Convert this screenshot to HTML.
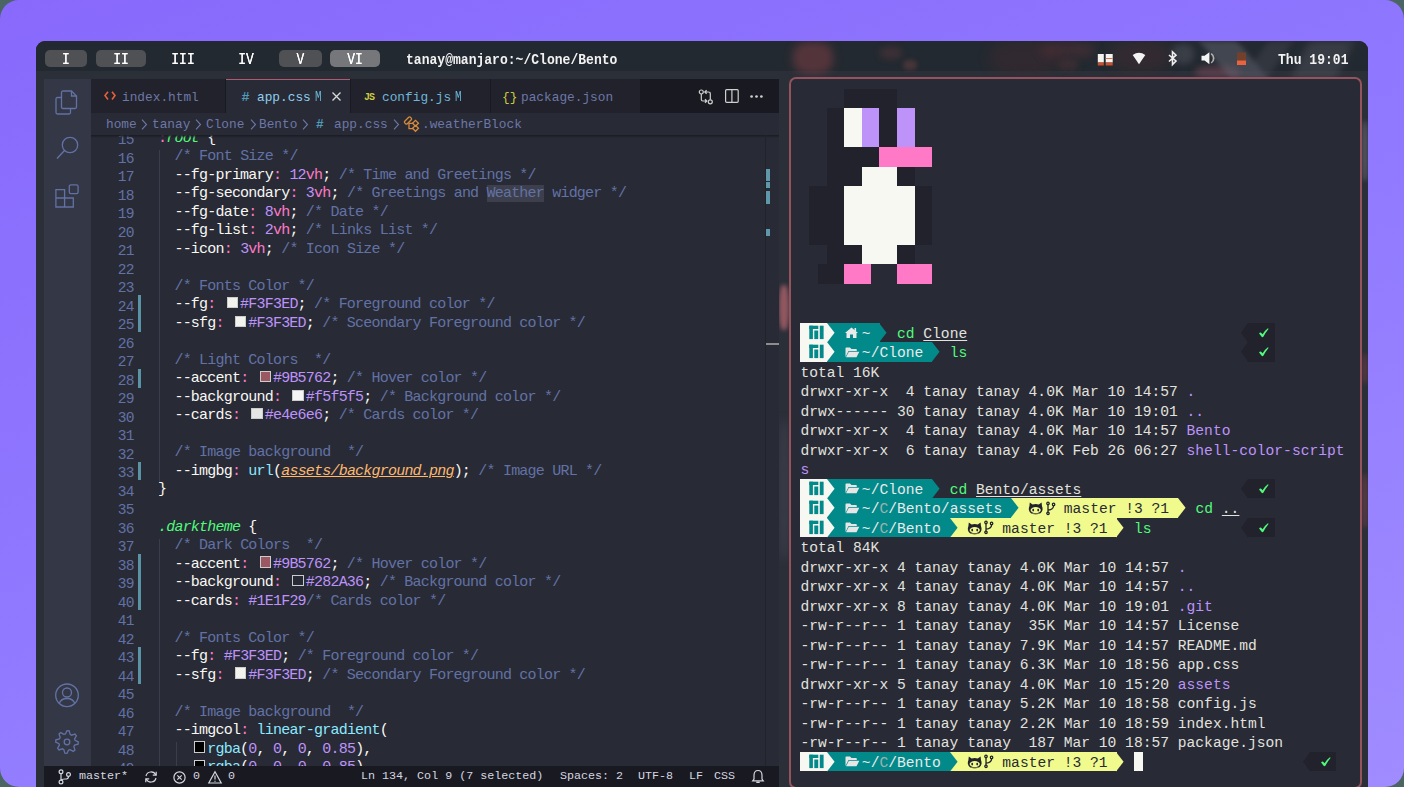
<!DOCTYPE html><html><head><meta charset="utf-8"><style>
*{margin:0;padding:0;box-sizing:border-box}
html,body{width:1404px;height:787px;overflow:hidden;background:#4b6464;font-family:"Liberation Mono",monospace}
.a{position:absolute}
svg{position:absolute;overflow:visible}
#bg{left:0;top:0;width:1404px;height:787px;border-radius:19px;background:linear-gradient(160deg,#8869fc 0%,#9079ff 50%,#a08cff 100%)}
#screen{left:36px;top:41px;width:1332px;height:746px;border-radius:9px 9px 0 0;background:#2b2f38;overflow:hidden}
#topbar{left:36px;top:41px;width:1332px;height:29.5px;border-radius:9px 9px 0 0;background:#232930}
.ws{top:50px;height:17px;border-radius:5px;color:#fff;font-weight:normal;text-shadow:0 0 0.4px #fff;font-size:13px;line-height:17px;text-align:center}.ws span{display:inline-block;transform:scaleY(1.2);transform-origin:50% 60%;position:relative;top:1.6px}
.tb{height:20px;line-height:20px;font-size:13.05px;font-weight:bold;color:#f2f2f2;white-space:pre;transform:scaleY(1.17);transform-origin:0 0}
#act{left:44px;top:79px;width:47px;height:687px;background:#343746}
#tabs{left:91px;top:79px;width:688px;height:34px;background:#191a21}
.tab{top:79px;height:34px;background:#21222c}
.tt{top:87.5px;height:20px;line-height:20px;font-size:12.8px;white-space:pre;color:#6d78a6}
#crumb{left:91px;top:113px;width:688px;height:22px;background:#282a36}
.bc{top:115px;height:20px;line-height:20px;font-size:12.8px;white-space:pre;color:#6d78a6}
#editor{left:91px;top:135px;width:688px;height:631px;background:#282a36;overflow:hidden}
#status{left:44px;top:766px;width:735px;height:21px;background:#191a21}
.st{top:766px;height:21px;line-height:21px;font-size:11.7px;white-space:pre;color:#d4d6e0}
#term{left:789px;top:77px;width:573px;height:712px;border:2px solid #94535d;border-radius:7px;background:#282a36}
.cl{left:158px;height:18.53px;font-size:15px;letter-spacing:-0.79px;line-height:18.53px;margin-top:-1.6px;white-space:pre;color:#f8f8f2}
.ln{left:91px;width:43px;text-align:right;height:18.53px;font-size:14.6px;letter-spacing:-0.6px;margin-top:-0.3px;line-height:18.53px;color:#6272a4}
.tr{left:800.4px;height:19.5px;font-size:14.63px;line-height:19.5px;margin-top:2px;white-space:pre;color:#d8d8d4}
.c{color:#6272a4}.p{color:#ff79c6}.n{color:#bd93f9}.g{color:#50fa7b;font-style:italic}.cy{color:#8be9fd}.o{color:#ffb86c;font-style:italic;text-decoration:underline}
.sw{display:inline-block;width:11.3px;height:11.2px;border:1px solid #ccc;vertical-align:0px;margin-left:3px;margin-right:2.1px}
.pb{position:absolute;height:19.5px}
</style></head><body>
<div id="bg" class="a"></div>
<div id="screen" class="a"></div>
<div id="topbar" class="a"></div>
<div class="a" style="left:36px;top:41px;width:1332px;height:746px;overflow:hidden;border-radius:9px 9px 0 0"><div class="a" style="left:-36px;top:-41px;width:1404px;height:787px">
<div class="a" style="left:793px;top:42px;width:40px;height:32px;background:rgba(125,62,70,0.55);border-radius:40%;filter:blur(4px)"></div>
<div class="a" style="left:880px;top:47px;width:22px;height:12px;background:rgba(110,60,66,0.35);border-radius:40%;filter:blur(3px)"></div>
<div class="a" style="left:903px;top:60px;width:14px;height:10px;background:rgba(125,72,72,0.4);border-radius:40%;filter:blur(2px)"></div>
<div class="a" style="left:1040px;top:42px;width:55px;height:16px;background:rgba(105,52,58,0.35);border-radius:40%;filter:blur(4px)"></div>
<div class="a" style="left:1058px;top:60px;width:20px;height:10px;background:rgba(105,58,58,0.35);border-radius:40%;filter:blur(3px)"></div>
<div class="a" style="left:990px;top:41px;width:70px;height:34px;background:rgba(80,42,48,0.3);border-radius:40%;filter:blur(6px)"></div>
<div class="a" style="left:1172px;top:44px;width:22px;height:20px;background:rgba(92,94,106,0.4);border-radius:40%;filter:blur(3px)"></div>
<div class="a" style="left:1195px;top:66px;width:45px;height:12px;background:rgba(140,80,100,0.45);border-radius:40%;filter:blur(3px)"></div>
<div class="a" style="left:1110px;top:41px;width:60px;height:30px;background:rgba(85,45,50,0.3);border-radius:40%;filter:blur(6px)"></div>
<div class="a" style="left:779px;top:285px;width:10px;height:45px;background:rgba(165,95,105,0.85);border-radius:40%;filter:blur(2px)"></div>
<div class="a" style="left:779px;top:420px;width:10px;height:140px;background:rgba(70,72,84,0.6);border-radius:40%;filter:blur(4px)"></div>
<div class="a" style="left:1362px;top:121px;width:6px;height:60px;background:rgba(110,112,120,0.6);border-radius:40%;filter:blur(2px)"></div>
<div class="a" style="left:1362px;top:354px;width:6px;height:30px;background:rgba(110,60,70,0.6);border-radius:40%;filter:blur(2px)"></div>
<div class="a" style="left:1362px;top:474px;width:6px;height:54px;background:rgba(120,65,75,0.6);border-radius:40%;filter:blur(2px)"></div>
<div class="a" style="left:1215px;top:41px;width:38px;height:38px;background:rgba(98,100,112,0.5);transform:skewX(40deg);filter:blur(3px)"></div>
<div class="a" style="left:1300px;top:41px;width:45px;height:38px;background:rgba(88,90,100,0.4);transform:skewX(-25deg);filter:blur(4px)"></div>
<div class="a" style="left:1255px;top:41px;width:25px;height:38px;background:rgba(70,72,84,0.4);transform:skewX(-35deg);filter:blur(3px)"></div>
</div></div>
<div class="a ws" style="left:45px;width:42px;background:#505154;"><span>I</span></div>
<div class="a ws" style="left:96px;width:50px;background:#505154;"><span>II</span></div>
<div class="a ws" style="left:160px;width:46px;"><span>III</span></div>
<div class="a ws" style="left:226px;width:40px;"><span>IV</span></div>
<div class="a ws" style="left:279px;width:43px;background:#505154;"><span>V</span></div>
<div class="a ws" style="left:330px;width:50px;background:#76777a;"><span>VI</span></div>
<div class="a tb" style="left:406px;top:49px">tanay@manjaro:~/Clone/Bento</div>
<div class="a tb" style="left:1278px;top:49px">Thu 19:01</div>
<svg style="left:1097px;top:53px" width="17" height="13"><rect x="0.8" y="1" width="6" height="8.5" fill="#f4f4f0"/><rect x="8.7" y="1" width="7" height="8.5" fill="#f4f4f0"/><rect x="0.8" y="9.5" width="6" height="3" fill="#c8502e"/><rect x="8.7" y="9.5" width="7" height="3" fill="#c8502e"/><rect x="8.7" y="5" width="7" height="1" fill="#e07050"/></svg>
<svg style="left:1132px;top:52px" width="15" height="13"><path d="M0.7 3 Q7 -1.5 13.3 3 L7 12.2 Z" fill="#f4f4f4"/></svg>
<svg style="left:1167px;top:51px" width="12" height="15"><path d="M2 4 L9 10 L5.5 13.5 V0.8 L9 4.2 L2 10.5" fill="none" stroke="#f0f0f0" stroke-width="1.6"/></svg>
<svg style="left:1200.5px;top:52px" width="16" height="13"><path d="M0.5 3.8 H3.6 L8.4 0.2 V12.3 L3.6 8.6 H0.5 Z" fill="#f4f4f4"/><path d="M10.2 1.6 A5.6 5.6 0 0 1 10.2 10.9" fill="none" stroke="#b0b0b0" stroke-width="1.7"/></svg>
<svg style="left:1236px;top:52px" width="11" height="14"><rect x="1" y="0.5" width="9" height="8.3" fill="#74402c"/><rect x="1" y="8.5" width="9" height="4.5" fill="#e8633e"/></svg>
<div id="act" class="a"></div>
<div id="tabs" class="a"></div>
<div class="a tab" style="left:91px;width:134px"></div>
<div class="a tab" style="left:226px;width:124px;background:#282a36;border-top:1.5px solid #b05a72"></div>
<div class="a tab" style="left:351px;width:139px"></div>
<div class="a tab" style="left:491px;width:149px"></div>
<svg style="left:104px;top:91px" width="12" height="10" fill="none" stroke="#e5603b" stroke-width="1.6"><path d="M4 0.8 L1 4.6 L4 8.4 M8 0.8 L11 4.6 L8 8.4"/></svg>
<div class="a tt" style="left:122px">index.html</div>
<div class="a tt" style="left:241.5px;color:#519aba;font-weight:bold;font-size:13.5px">#</div>
<div class="a tt" style="left:257px;color:#8fd0ef">app.css</div>
<div class="a tt" style="left:315px;top:87px;color:#6ab6d8;font-size:11px;transform:scaleY(1.3)">M</div>
<svg style="left:332px;top:92px" width="9" height="9"><path d="M0.5 0.5 L8.5 8.5 M8.5 0.5 L0.5 8.5" stroke="#dadada" stroke-width="1.3"/></svg>
<div class="a tt" style="left:364px;color:#cbcb41;font-weight:bold;font-size:10px;letter-spacing:-1px">JS</div>
<div class="a tt" style="left:382px;color:#6fb7da">config.js</div>
<div class="a tt" style="left:455px;top:87px;color:#6ab6d8;font-size:11px;transform:scaleY(1.3)">M</div>
<div class="a tt" style="left:502px;color:#cbcb41">{}</div>
<div class="a tt" style="left:521px">package.json</div>
<svg style="left:698px;top:89px" width="16" height="16" fill="none" stroke="#cfcfcf" stroke-width="1.2"><circle cx="3.3" cy="3" r="2"/><circle cx="12.3" cy="12.8" r="2"/><path d="M3.3 5 V10.5 Q3.3 12 5 12 H8.5 M7 10.3 L8.8 12 L7 13.7"/><path d="M12.3 10.8 V5 Q12.3 3 10.5 3 H7 M8.6 1.3 L6.8 3 L8.6 4.7"/></svg>
<svg style="left:725px;top:89px" width="14" height="14" fill="none" stroke="#cfcfcf" stroke-width="1.2"><rect x="0.6" y="0.7" width="12.6" height="12.6" rx="1"/><path d="M6.9 0.7 V13.3"/></svg>
<svg style="left:750px;top:95px" width="14" height="3" fill="#cfcfcf"><circle cx="1.6" cy="1.5" r="1.35"/><circle cx="6.5" cy="1.5" r="1.35"/><circle cx="11.4" cy="1.5" r="1.35"/></svg>
<svg style="left:55px;top:90px" width="24" height="25" fill="none" stroke="#6272a4" stroke-width="1.3"><path d="M6.5 7.5 H2.5 Q1 7.5 1 9 V22.5 Q1 24 2.5 24 H14 Q15.5 24 15.5 22.5 V18.5"/><path d="M8 1 H16.5 L21.5 6 V17 Q21.5 18.5 20 18.5 H8 Q6.5 18.5 6.5 17 V2.5 Q6.5 1 8 1 Z"/><path d="M16.5 1 V6 H21.5"/></svg>
<svg style="left:56px;top:136px" width="24" height="25" fill="none" stroke="#6272a4" stroke-width="1.3" stroke-width="1.4"><circle cx="14" cy="9" r="7.7"/><path d="M8.5 14.5 L1 22.5"/></svg>
<svg style="left:55px;top:184px" width="25" height="25" fill="none" stroke="#6272a4" stroke-width="1.3"><path d="M0.9 5.6 H9.6 V14 H18.3 V23 H0.9 Z M0.9 14 H9.6 V23"/><rect x="14.3" y="0.8" width="8.8" height="8.8" rx="1.6"/></svg>
<svg style="left:55px;top:683px" width="25" height="25" fill="none" stroke="#6272a4" stroke-width="1.3"><circle cx="12" cy="12.3" r="11.3"/><circle cx="12" cy="9.5" r="4.5"/><path d="M4.2 20.5 Q6 15.5 12 15.5 Q18 15.5 19.8 20.5"/></svg>
<svg style="left:55px;top:730px" width="25" height="25" fill="none" stroke="#6272a4" stroke-width="1.3"><path d="M10.40 3.96 L12.00 0.70 L14.20 0.92 L15.14 4.42 L16.56 5.18 L19.99 4.01 L21.40 5.72 L19.58 8.86 L20.04 10.40 L23.30 12.00 L23.08 14.20 L19.58 15.14 L18.82 16.56 L19.99 19.99 L18.28 21.40 L15.14 19.58 L13.60 20.04 L12.00 23.30 L9.80 23.08 L8.86 19.58 L7.44 18.82 L4.01 19.99 L2.60 18.28 L4.42 15.14 L3.96 13.60 L0.70 12.00 L0.92 9.80 L4.42 8.86 L5.18 7.44 L4.01 4.01 L5.72 2.60 L8.86 4.42 Z"/><circle cx="12" cy="12" r="2.8"/></svg>
<div id="crumb" class="a"></div>
<div id="editor" class="a"></div>
<div class="a bc" style="left:106px">home</div>
<svg style="left:141px;top:119px" width="7" height="11"><path d="M1 0.7 L5.5 5.5 L1 10.3" fill="none" stroke="#6d78a6" stroke-width="1.1"/></svg>
<div class="a bc" style="left:152px">tanay</div>
<svg style="left:195px;top:119px" width="7" height="11"><path d="M1 0.7 L5.5 5.5 L1 10.3" fill="none" stroke="#6d78a6" stroke-width="1.1"/></svg>
<div class="a bc" style="left:206px">Clone</div>
<svg style="left:250px;top:119px" width="7" height="11"><path d="M1 0.7 L5.5 5.5 L1 10.3" fill="none" stroke="#6d78a6" stroke-width="1.1"/></svg>
<div class="a bc" style="left:259px">Bento</div>
<svg style="left:302px;top:119px" width="7" height="11"><path d="M1 0.7 L5.5 5.5 L1 10.3" fill="none" stroke="#6d78a6" stroke-width="1.1"/></svg>
<div class="a bc" style="left:316px;color:#519aba;font-weight:bold">#</div>
<div class="a bc" style="left:334px">app.css</div>
<svg style="left:393px;top:119px" width="7" height="11"><path d="M1 0.7 L5.5 5.5 L1 10.3" fill="none" stroke="#6d78a6" stroke-width="1.1"/></svg>
<svg style="left:400px;top:114px" width="24" height="20" fill="none" stroke="#d68b3c" stroke-width="1.3"><rect x="4" y="4.7" width="8" height="3.6" rx="1.2" transform="rotate(-45 8 6.5)"/><rect x="13.4" y="7.2" width="4.2" height="4.2" transform="rotate(45 15.5 9.3)"/><rect x="13.4" y="12.2" width="4.2" height="4.2" transform="rotate(45 15.5 14.3)"/><path d="M9 8.6 V14.6 H13.3 M9.5 9.4 H13.3"/></svg>
<div class="a bc" style="left:422px">.weatherBlock</div>
<div class="a" style="left:91px;top:135px;width:674px;height:631px;overflow:hidden">
<div class="a" style="left:-91px;top:-135px;width:1000px;height:1000px">
<div class="a" style="left:159px;top:150.0px;width:1px;height:333.1px;background:#3b3d4b"></div>
<div class="a" style="left:159px;top:538.6px;width:1px;height:259.1px;background:#3b3d4b"></div>
<div class="a" style="left:176px;top:742.2px;width:1px;height:55.5px;background:#3b3d4b"></div>
<div class="a" style="left:138px;top:295.2px;width:3px;height:37.0px;background:#5a93a6"></div>
<div class="a" style="left:138px;top:369.3px;width:3px;height:18.5px;background:#5a93a6"></div>
<div class="a" style="left:138px;top:461.8px;width:3px;height:18.5px;background:#5a93a6"></div>
<div class="a" style="left:138px;top:554.3px;width:3px;height:55.5px;background:#5a93a6"></div>
<div class="a" style="left:138px;top:646.8px;width:3px;height:37.0px;background:#5a93a6"></div>
<div class="a ln" style="top:131.50px">15</div>
<div class="a cl" style="top:131.50px"><span class="p">:</span><span class="g">root</span> {</div>
<div class="a ln" style="top:150.00px">16</div>
<div class="a cl" style="top:150.00px">  <span class="c">/* Font Size */</span></div>
<div class="a ln" style="top:168.50px">17</div>
<div class="a cl" style="top:168.50px">  --fg-primary<span class="p">:</span> <span class="n">12</span><span class="p">vh</span>;<span class="c"> /* Time and Greetings */</span></div>
<div class="a ln" style="top:187.01px">18</div>
<div class="a cl" style="top:187.01px">  --fg-secondary<span class="p">:</span> <span class="n">3</span><span class="p">vh</span>;<span class="c"> /* Greetings and </span><span class="c" style="background:#3d3f4c">Weather</span><span class="c"> widger */</span></div>
<div class="a ln" style="top:205.51px">19</div>
<div class="a cl" style="top:205.51px">  --fg-date<span class="p">:</span> <span class="n">8</span><span class="p">vh</span>;<span class="c"> /* Date */</span></div>
<div class="a ln" style="top:224.02px">20</div>
<div class="a cl" style="top:224.02px">  --fg-list<span class="p">:</span> <span class="n">2</span><span class="p">vh</span>;<span class="c"> /* Links List */</span></div>
<div class="a ln" style="top:242.52px">21</div>
<div class="a cl" style="top:242.52px">  --icon<span class="p">:</span> <span class="n">3</span><span class="p">vh</span>;<span class="c"> /* Icon Size */</span></div>
<div class="a ln" style="top:261.03px">22</div>
<div class="a cl" style="top:261.03px"></div>
<div class="a ln" style="top:279.53px">23</div>
<div class="a cl" style="top:279.53px">  <span class="c">/* Fonts Color */</span></div>
<div class="a ln" style="top:298.04px">24</div>
<div class="a cl" style="top:298.04px">  --fg<span class="p">:</span> <span class="sw" style="background:#F3F3ED"></span><span class="n">#F3F3ED</span>;<span class="c"> /* Foreground color */</span></div>
<div class="a ln" style="top:316.54px">25</div>
<div class="a cl" style="top:316.54px">  --sfg<span class="p">:</span> <span class="sw" style="background:#F3F3ED"></span><span class="n">#F3F3ED</span>;<span class="c"> /* Sceondary Foreground color */</span></div>
<div class="a ln" style="top:335.05px">26</div>
<div class="a cl" style="top:335.05px"></div>
<div class="a ln" style="top:353.55px">27</div>
<div class="a cl" style="top:353.55px">  <span class="c">/* Light Colors  */</span></div>
<div class="a ln" style="top:372.06px">28</div>
<div class="a cl" style="top:372.06px">  --accent<span class="p">:</span> <span class="sw" style="background:#9B5762"></span><span class="n">#9B5762</span>;<span class="c"> /* Hover color */</span></div>
<div class="a ln" style="top:390.56px">29</div>
<div class="a cl" style="top:390.56px">  --background<span class="p">:</span> <span class="sw" style="background:#f5f5f5"></span><span class="n">#f5f5f5</span>;<span class="c"> /* Background color */</span></div>
<div class="a ln" style="top:409.07px">30</div>
<div class="a cl" style="top:409.07px">  --cards<span class="p">:</span> <span class="sw" style="background:#e4e6e6"></span><span class="n">#e4e6e6</span>;<span class="c"> /* Cards color */</span></div>
<div class="a ln" style="top:427.57px">31</div>
<div class="a cl" style="top:427.57px"></div>
<div class="a ln" style="top:446.08px">32</div>
<div class="a cl" style="top:446.08px">  <span class="c">/* Image background  */</span></div>
<div class="a ln" style="top:464.58px">33</div>
<div class="a cl" style="top:464.58px">  --imgbg<span class="p">:</span> <span class="cy">url</span>(<span class="o">assets/background.png</span>);<span class="c"> /* Image URL */</span></div>
<div class="a ln" style="top:483.09px">34</div>
<div class="a cl" style="top:483.09px">}</div>
<div class="a ln" style="top:501.59px">35</div>
<div class="a cl" style="top:501.59px"></div>
<div class="a ln" style="top:520.10px">36</div>
<div class="a cl" style="top:520.10px"><span class="g">.darktheme</span> {</div>
<div class="a ln" style="top:538.61px">37</div>
<div class="a cl" style="top:538.61px">  <span class="c">/* Dark Colors  */</span></div>
<div class="a ln" style="top:557.11px">38</div>
<div class="a cl" style="top:557.11px">  --accent<span class="p">:</span> <span class="sw" style="background:#9B5762"></span><span class="n">#9B5762</span>;<span class="c"> /* Hover color */</span></div>
<div class="a ln" style="top:575.62px">39</div>
<div class="a cl" style="top:575.62px">  --background<span class="p">:</span> <span class="sw" style="background:#282A36"></span><span class="n">#282A36</span>;<span class="c"> /* Background color */</span></div>
<div class="a ln" style="top:594.12px">40</div>
<div class="a cl" style="top:594.12px">  --cards<span class="p">:</span> <span class="n">#1E1F29</span><span class="c">/* Cards color */</span></div>
<div class="a ln" style="top:612.62px">41</div>
<div class="a cl" style="top:612.62px"></div>
<div class="a ln" style="top:631.13px">42</div>
<div class="a cl" style="top:631.13px">  <span class="c">/* Fonts Color */</span></div>
<div class="a ln" style="top:649.63px">43</div>
<div class="a cl" style="top:649.63px">  --fg<span class="p">:</span> <span class="n">#F3F3ED</span>;<span class="c"> /* Foreground color */</span></div>
<div class="a ln" style="top:668.14px">44</div>
<div class="a cl" style="top:668.14px">  --sfg<span class="p">:</span> <span class="sw" style="background:#F3F3ED"></span><span class="n">#F3F3ED</span>;<span class="c"> /* Secondary Foreground color */</span></div>
<div class="a ln" style="top:686.64px">45</div>
<div class="a cl" style="top:686.64px"></div>
<div class="a ln" style="top:705.15px">46</div>
<div class="a cl" style="top:705.15px">  <span class="c">/* Image background  */</span></div>
<div class="a ln" style="top:723.65px">47</div>
<div class="a cl" style="top:723.65px">  --imgcol<span class="p">:</span> <span class="cy">linear-gradient</span>(</div>
<div class="a ln" style="top:742.16px">48</div>
<div class="a cl" style="top:742.16px">    <span class="sw" style="background:#000000"></span><span class="cy">rgba</span>(<span class="n">0</span>, <span class="n">0</span>, <span class="n">0</span>, <span class="n">0.85</span>),</div>
<div class="a ln" style="top:760.66px">49</div>
<div class="a cl" style="top:760.66px">    <span class="sw" style="background:#000000"></span><span class="cy">rgba</span>(<span class="n">0</span>, <span class="n">0</span>, <span class="n">0</span>, <span class="n">0.85</span>),</div>
</div></div>
<div class="a" style="left:91px;top:135px;width:688px;height:3px;background:linear-gradient(#1a1b22,rgba(26,27,34,0))"></div>
<div class="a" style="left:765px;top:135px;width:1px;height:631px;background:#21222c"></div>
<div class="a" style="left:766px;top:169px;width:4px;height:11.5px;background:#5f97ab"></div>
<div class="a" style="left:766px;top:182.3px;width:4px;height:5.7px;background:#5f97ab"></div>
<div class="a" style="left:766px;top:191px;width:4px;height:13.0px;background:#5f97ab"></div>
<div class="a" style="left:766px;top:229px;width:4px;height:6.5px;background:#5f97ab"></div>
<div class="a" style="left:766px;top:343px;width:13px;height:2px;background:#8d8d8d"></div>
<div id="status" class="a"></div>
<svg style="left:58px;top:769px" width="13" height="16" fill="none" stroke="#d4d6e0" stroke-width="1.2"><circle cx="3" cy="2.8" r="1.9"/><circle cx="3" cy="13" r="1.9"/><circle cx="10.5" cy="5.5" r="1.9"/><path d="M3 4.7 V11.1 M10.5 7.4 Q10.5 10 7 10 Q3.5 10 3 11.5"/></svg>
<div class="a st" style="left:79px">master*</div>
<svg style="left:144px;top:770px" width="14" height="14" fill="none" stroke="#d4d6e0" stroke-width="1.2"><path d="M2 6 A5.2 5.2 0 0 1 11.8 5 M12 8 A5.2 5.2 0 0 1 2.2 9"/><path d="M12.2 1.8 V5.2 H8.8 M1.8 12.2 V8.8 H5.2"/></svg>
<svg style="left:173px;top:771px" width="13" height="13" fill="none" stroke="#d4d6e0" stroke-width="1.2"><circle cx="6.5" cy="6.5" r="5.6"/><path d="M4.3 4.3 L8.7 8.7 M8.7 4.3 L4.3 8.7"/></svg>
<div class="a st" style="left:193px">0</div>
<svg style="left:208px;top:771px" width="14" height="13" fill="none" stroke="#d4d6e0" stroke-width="1.2"><path d="M7 0.8 L13.2 12 H0.8 Z M7 4.5 V8.5 M7 9.8 V10.8"/></svg>
<div class="a st" style="left:228px">0</div>
<div class="a st" style="left:361px">Ln 134, Col 9 (7 selected)</div>
<div class="a st" style="left:560px">Spaces: 2</div>
<div class="a st" style="left:638px">UTF-8</div>
<div class="a st" style="left:689px">LF</div>
<div class="a st" style="left:714px">CSS</div>
<svg style="left:752px;top:769px" width="12" height="15" fill="none" stroke="#d4d6e0" stroke-width="1.2"><path d="M6 1.5 Q10 1.5 10 6.5 V10 L11.3 11.8 H0.7 L2 10 V6.5 Q2 1.5 6 1.5 Z M4.3 13.4 H7.7"/></svg>
<div id="term" class="a"></div>
<div class="a" style="left:844.30px;top:88.60px;width:52.98px;height:19.80px;background:#21222c"></div>
<div class="a" style="left:826.74px;top:108.10px;width:17.86px;height:19.80px;background:#21222c"></div>
<div class="a" style="left:844.30px;top:108.10px;width:17.86px;height:19.80px;background:#f8f8f2"></div>
<div class="a" style="left:861.86px;top:108.10px;width:17.86px;height:19.80px;background:#bd93f9"></div>
<div class="a" style="left:879.42px;top:108.10px;width:17.86px;height:19.80px;background:#21222c"></div>
<div class="a" style="left:896.98px;top:108.10px;width:17.86px;height:19.80px;background:#bd93f9"></div>
<div class="a" style="left:826.74px;top:127.60px;width:17.86px;height:19.80px;background:#21222c"></div>
<div class="a" style="left:844.30px;top:127.60px;width:17.86px;height:19.80px;background:#f8f8f2"></div>
<div class="a" style="left:861.86px;top:127.60px;width:17.86px;height:19.80px;background:#bd93f9"></div>
<div class="a" style="left:879.42px;top:127.60px;width:17.86px;height:19.80px;background:#21222c"></div>
<div class="a" style="left:896.98px;top:127.60px;width:17.86px;height:19.80px;background:#bd93f9"></div>
<div class="a" style="left:826.74px;top:147.10px;width:52.98px;height:19.80px;background:#21222c"></div>
<div class="a" style="left:879.42px;top:147.10px;width:52.98px;height:19.80px;background:#ff79c6"></div>
<div class="a" style="left:826.74px;top:166.60px;width:35.42px;height:19.80px;background:#21222c"></div>
<div class="a" style="left:861.86px;top:166.60px;width:35.42px;height:19.80px;background:#f8f8f2"></div>
<div class="a" style="left:896.98px;top:166.60px;width:17.86px;height:19.80px;background:#21222c"></div>
<div class="a" style="left:809.18px;top:186.10px;width:35.42px;height:19.80px;background:#21222c"></div>
<div class="a" style="left:844.30px;top:186.10px;width:70.54px;height:19.80px;background:#f8f8f2"></div>
<div class="a" style="left:914.54px;top:186.10px;width:17.86px;height:19.80px;background:#21222c"></div>
<div class="a" style="left:809.18px;top:205.60px;width:35.42px;height:19.80px;background:#21222c"></div>
<div class="a" style="left:844.30px;top:205.60px;width:70.54px;height:19.80px;background:#f8f8f2"></div>
<div class="a" style="left:914.54px;top:205.60px;width:17.86px;height:19.80px;background:#21222c"></div>
<div class="a" style="left:809.18px;top:225.10px;width:35.42px;height:19.80px;background:#21222c"></div>
<div class="a" style="left:844.30px;top:225.10px;width:70.54px;height:19.80px;background:#f8f8f2"></div>
<div class="a" style="left:914.54px;top:225.10px;width:17.86px;height:19.80px;background:#21222c"></div>
<div class="a" style="left:826.74px;top:244.60px;width:35.42px;height:19.80px;background:#21222c"></div>
<div class="a" style="left:861.86px;top:244.60px;width:35.42px;height:19.80px;background:#f8f8f2"></div>
<div class="a" style="left:896.98px;top:244.60px;width:17.86px;height:19.80px;background:#21222c"></div>
<div class="a" style="left:817.96px;top:264.10px;width:26.64px;height:19.80px;background:#21222c"></div>
<div class="a" style="left:844.30px;top:264.10px;width:26.64px;height:19.80px;background:#ff79c6"></div>
<div class="a" style="left:896.98px;top:264.10px;width:35.42px;height:19.80px;background:#ff79c6"></div>
<div class="a" style="left:800.40px;top:322.60px;width:26.54px;height:19.50px;background:#f8f8f2"></div><svg style="left:809.18px;top:322.60px" width="18" height="20" fill="#02898a"><rect x="0.3" y="2.7" width="3.6" height="13.4"/><rect x="0.3" y="2.7" width="9" height="3.3"/><rect x="5.3" y="7.5" width="3.9" height="8.6"/><rect x="10.8" y="2.7" width="3.8" height="13.4"/></svg><div class="a" style="left:826.74px;top:322.60px;width:8.98px;height:19.50px;background:#02898a"></div><svg style="left:826.74px;top:322.60px" width="9" height="19.5"><path d="M0 0 L7.6 9.75 L0 19.5 Z" fill="#f8f8f2"/></svg><div class="a" style="left:835.52px;top:322.60px;width:44.10px;height:19.50px;background:#02898a"></div><svg style="left:844.80px;top:326.60px" width="14" height="12" fill="#eaeaea"><path d="M6.5 0.5 L13 6 L11.5 6 L11.5 11 L8 11 L8 7.5 L5 7.5 L5 11 L1.5 11 L1.5 6 L0 6 Z"/><rect x="9.5" y="1" width="1.6" height="3"/></svg><div class="a tr" style="left:861.86px;top:322.60px;color:#eaeaea;">~</div><svg style="left:879.42px;top:322.60px" width="9" height="19.5"><path d="M0 0 L7.6 9.75 L0 19.5 Z" fill="#02898a"/></svg><div class="a tr" style="left:896.98px;top:322.60px;color:#50fa7b;">cd</div><div class="a tr" style="left:923.32px;top:322.60px;color:#e2e2de;text-decoration:underline;text-underline-offset:2px">Clone</div><svg style="left:1239.40px;top:322.60px" width="9" height="19.5"><path d="M8.979999999999999 0 L2.079999999999999 9.75 L8.979999999999999 19.5 Z" fill="#21222c"/></svg><div class="a" style="left:1248.18px;top:322.60px;width:26.54px;height:19.50px;background:#21222c"></div><svg style="left:1259.16px;top:327.80px" width="10" height="10"><path d="M0.1 5.4 Q0.9 4.1 2.1 4.7 L3.6 6.2 Q5.8 2.5 8.9 0.2 Q9.8 0.4 9.3 1.3 Q6.6 4.6 4.5 8.6 Q3.6 9.8 2.6 8.8 Z" fill="#50fa7b"/></svg>
<div class="a" style="left:800.40px;top:342.10px;width:26.54px;height:19.50px;background:#f8f8f2"></div><svg style="left:809.18px;top:342.10px" width="18" height="20" fill="#02898a"><rect x="0.3" y="2.7" width="3.6" height="13.4"/><rect x="0.3" y="2.7" width="9" height="3.3"/><rect x="5.3" y="7.5" width="3.9" height="8.6"/><rect x="10.8" y="2.7" width="3.8" height="13.4"/></svg><div class="a" style="left:826.74px;top:342.10px;width:8.98px;height:19.50px;background:#02898a"></div><svg style="left:826.74px;top:342.10px" width="9" height="19.5"><path d="M0 0 L7.6 9.75 L0 19.5 Z" fill="#f8f8f2"/></svg><div class="a" style="left:835.52px;top:342.10px;width:96.78px;height:19.50px;background:#02898a"></div><svg style="left:844.80px;top:346.60px" width="15" height="11" fill="#e6e6e6"><path d="M0.5 1.3 Q0.5 0.5 1.3 0.5 H5 L6.5 2 H11 Q11.8 2 11.8 2.8 V4 H3.5 L0.5 10 Z"/><path d="M3.8 4.8 H14.3 L11.5 10.3 H1 Z"/></svg><div class="a tr" style="left:861.86px;top:342.10px;color:#eaeaea;">~/Clone</div><svg style="left:932.10px;top:342.10px" width="9" height="19.5"><path d="M0 0 L7.6 9.75 L0 19.5 Z" fill="#02898a"/></svg><div class="a tr" style="left:949.66px;top:342.10px;color:#50fa7b;">ls</div><svg style="left:1239.40px;top:342.10px" width="9" height="19.5"><path d="M8.979999999999999 0 L2.079999999999999 9.75 L8.979999999999999 19.5 Z" fill="#21222c"/></svg><div class="a" style="left:1248.18px;top:342.10px;width:26.54px;height:19.50px;background:#21222c"></div><svg style="left:1259.16px;top:347.30px" width="10" height="10"><path d="M0.1 5.4 Q0.9 4.1 2.1 4.7 L3.6 6.2 Q5.8 2.5 8.9 0.2 Q9.8 0.4 9.3 1.3 Q6.6 4.6 4.5 8.6 Q3.6 9.8 2.6 8.8 Z" fill="#50fa7b"/></svg>
<div class="a" style="left:800.40px;top:478.60px;width:26.54px;height:19.50px;background:#f8f8f2"></div><svg style="left:809.18px;top:478.60px" width="18" height="20" fill="#02898a"><rect x="0.3" y="2.7" width="3.6" height="13.4"/><rect x="0.3" y="2.7" width="9" height="3.3"/><rect x="5.3" y="7.5" width="3.9" height="8.6"/><rect x="10.8" y="2.7" width="3.8" height="13.4"/></svg><div class="a" style="left:826.74px;top:478.60px;width:8.98px;height:19.50px;background:#02898a"></div><svg style="left:826.74px;top:478.60px" width="9" height="19.5"><path d="M0 0 L7.6 9.75 L0 19.5 Z" fill="#f8f8f2"/></svg><div class="a" style="left:835.52px;top:478.60px;width:96.78px;height:19.50px;background:#02898a"></div><svg style="left:844.80px;top:483.10px" width="15" height="11" fill="#e6e6e6"><path d="M0.5 1.3 Q0.5 0.5 1.3 0.5 H5 L6.5 2 H11 Q11.8 2 11.8 2.8 V4 H3.5 L0.5 10 Z"/><path d="M3.8 4.8 H14.3 L11.5 10.3 H1 Z"/></svg><div class="a tr" style="left:861.86px;top:478.60px;color:#eaeaea;">~/Clone</div><svg style="left:932.10px;top:478.60px" width="9" height="19.5"><path d="M0 0 L7.6 9.75 L0 19.5 Z" fill="#02898a"/></svg><div class="a tr" style="left:949.66px;top:478.60px;color:#50fa7b;">cd</div><div class="a tr" style="left:976.00px;top:478.60px;color:#e2e2de;text-decoration:underline;text-underline-offset:2px">Bento/assets</div><svg style="left:1239.40px;top:478.60px" width="9" height="19.5"><path d="M8.979999999999999 0 L2.079999999999999 9.75 L8.979999999999999 19.5 Z" fill="#21222c"/></svg><div class="a" style="left:1248.18px;top:478.60px;width:26.54px;height:19.50px;background:#21222c"></div><svg style="left:1259.16px;top:483.80px" width="10" height="10"><path d="M0.1 5.4 Q0.9 4.1 2.1 4.7 L3.6 6.2 Q5.8 2.5 8.9 0.2 Q9.8 0.4 9.3 1.3 Q6.6 4.6 4.5 8.6 Q3.6 9.8 2.6 8.8 Z" fill="#50fa7b"/></svg>
<div class="a" style="left:800.40px;top:498.10px;width:26.54px;height:19.50px;background:#f8f8f2"></div><svg style="left:809.18px;top:498.10px" width="18" height="20" fill="#02898a"><rect x="0.3" y="2.7" width="3.6" height="13.4"/><rect x="0.3" y="2.7" width="9" height="3.3"/><rect x="5.3" y="7.5" width="3.9" height="8.6"/><rect x="10.8" y="2.7" width="3.8" height="13.4"/></svg><div class="a" style="left:826.74px;top:498.10px;width:8.98px;height:19.50px;background:#02898a"></div><svg style="left:826.74px;top:498.10px" width="9" height="19.5"><path d="M0 0 L7.6 9.75 L0 19.5 Z" fill="#f8f8f2"/></svg><div class="a" style="left:835.52px;top:498.10px;width:175.80px;height:19.50px;background:#02898a"></div><svg style="left:844.80px;top:502.60px" width="15" height="11" fill="#e6e6e6"><path d="M0.5 1.3 Q0.5 0.5 1.3 0.5 H5 L6.5 2 H11 Q11.8 2 11.8 2.8 V4 H3.5 L0.5 10 Z"/><path d="M3.8 4.8 H14.3 L11.5 10.3 H1 Z"/></svg><div class="a tr" style="left:861.86px;top:498.10px;color:#eaeaea;">~/<span style="color:#9fb0b0">C</span>/Bento/assets</div><div class="a" style="left:1011.12px;top:498.10px;width:167.02px;height:19.50px;background:#f1fa8c"></div><svg style="left:1011.12px;top:498.10px" width="9" height="19.5"><path d="M0 0 L7.6 9.75 L0 19.5 Z" fill="#02898a"/></svg><svg style="left:1028.98px;top:502.10px" width="14" height="13"><path d="M0.8 0.5 L3.6 2.5 Q6.7 1.6 9.8 2.5 L12.6 0.5 L13 4.3 Q13.8 6 13.5 8 Q12.8 12.2 6.7 12.2 Q0.6 12.2 -0.1 8 Q-0.4 6 0.4 4.3 Z" fill="#21222c"/><ellipse cx="6.7" cy="8.1" rx="5.1" ry="3.1" fill="#f1fa8c"/><ellipse cx="4.2" cy="8.1" rx="0.9" ry="1.3" fill="#21222c"/><ellipse cx="9.2" cy="8.1" rx="0.9" ry="1.3" fill="#21222c"/><path d="M2.5 11.3 Q6.7 12.6 10.9 11.3" stroke="#8a8c60" stroke-width="0.8" fill="none"/></svg><svg style="left:1046.74px;top:501.60px" width="10" height="14" fill="none" stroke="#21222c" stroke-width="1.3"><path d="M1 2.6 V10 M6.6 3.7 Q6.6 7.5 1 8.2"/><circle cx="1" cy="1.4" r="1.2"/><circle cx="1" cy="11.3" r="1.2"/><circle cx="6.6" cy="2.4" r="1.2"/></svg><div class="a tr" style="left:1063.80px;top:498.10px;color:#282a36;">master !3 ?1</div><svg style="left:1177.94px;top:498.10px" width="9" height="19.5"><path d="M0 0 L7.6 9.75 L0 19.5 Z" fill="#f1fa8c"/></svg><div class="a tr" style="left:1195.50px;top:498.10px;color:#50fa7b;">cd</div><div class="a tr" style="left:1221.84px;top:498.10px;color:#e2e2de;text-decoration:underline;text-underline-offset:2px">..</div>
<div class="a" style="left:800.40px;top:517.60px;width:26.54px;height:19.50px;background:#f8f8f2"></div><svg style="left:809.18px;top:517.60px" width="18" height="20" fill="#02898a"><rect x="0.3" y="2.7" width="3.6" height="13.4"/><rect x="0.3" y="2.7" width="9" height="3.3"/><rect x="5.3" y="7.5" width="3.9" height="8.6"/><rect x="10.8" y="2.7" width="3.8" height="13.4"/></svg><div class="a" style="left:826.74px;top:517.60px;width:8.98px;height:19.50px;background:#02898a"></div><svg style="left:826.74px;top:517.60px" width="9" height="19.5"><path d="M0 0 L7.6 9.75 L0 19.5 Z" fill="#f8f8f2"/></svg><div class="a" style="left:835.52px;top:517.60px;width:114.34px;height:19.50px;background:#02898a"></div><svg style="left:844.80px;top:522.10px" width="15" height="11" fill="#e6e6e6"><path d="M0.5 1.3 Q0.5 0.5 1.3 0.5 H5 L6.5 2 H11 Q11.8 2 11.8 2.8 V4 H3.5 L0.5 10 Z"/><path d="M3.8 4.8 H14.3 L11.5 10.3 H1 Z"/></svg><div class="a tr" style="left:861.86px;top:517.60px;color:#eaeaea;">~/<span style="color:#9fb0b0">C</span>/Bento</div><div class="a" style="left:949.66px;top:517.60px;width:167.02px;height:19.50px;background:#f1fa8c"></div><svg style="left:949.66px;top:517.60px" width="9" height="19.5"><path d="M0 0 L7.6 9.75 L0 19.5 Z" fill="#02898a"/></svg><svg style="left:967.52px;top:521.60px" width="14" height="13"><path d="M0.8 0.5 L3.6 2.5 Q6.7 1.6 9.8 2.5 L12.6 0.5 L13 4.3 Q13.8 6 13.5 8 Q12.8 12.2 6.7 12.2 Q0.6 12.2 -0.1 8 Q-0.4 6 0.4 4.3 Z" fill="#21222c"/><ellipse cx="6.7" cy="8.1" rx="5.1" ry="3.1" fill="#f1fa8c"/><ellipse cx="4.2" cy="8.1" rx="0.9" ry="1.3" fill="#21222c"/><ellipse cx="9.2" cy="8.1" rx="0.9" ry="1.3" fill="#21222c"/><path d="M2.5 11.3 Q6.7 12.6 10.9 11.3" stroke="#8a8c60" stroke-width="0.8" fill="none"/></svg><svg style="left:985.28px;top:521.10px" width="10" height="14" fill="none" stroke="#21222c" stroke-width="1.3"><path d="M1 2.6 V10 M6.6 3.7 Q6.6 7.5 1 8.2"/><circle cx="1" cy="1.4" r="1.2"/><circle cx="1" cy="11.3" r="1.2"/><circle cx="6.6" cy="2.4" r="1.2"/></svg><div class="a tr" style="left:1002.34px;top:517.60px;color:#282a36;">master !3 ?1</div><svg style="left:1116.48px;top:517.60px" width="9" height="19.5"><path d="M0 0 L7.6 9.75 L0 19.5 Z" fill="#f1fa8c"/></svg><div class="a tr" style="left:1134.04px;top:517.60px;color:#50fa7b;">ls</div><svg style="left:1239.40px;top:517.60px" width="9" height="19.5"><path d="M8.979999999999999 0 L2.079999999999999 9.75 L8.979999999999999 19.5 Z" fill="#21222c"/></svg><div class="a" style="left:1248.18px;top:517.60px;width:26.54px;height:19.50px;background:#21222c"></div><svg style="left:1259.16px;top:522.80px" width="10" height="10"><path d="M0.1 5.4 Q0.9 4.1 2.1 4.7 L3.6 6.2 Q5.8 2.5 8.9 0.2 Q9.8 0.4 9.3 1.3 Q6.6 4.6 4.5 8.6 Q3.6 9.8 2.6 8.8 Z" fill="#50fa7b"/></svg>
<div class="a" style="left:800.40px;top:751.60px;width:26.54px;height:19.50px;background:#f8f8f2"></div><svg style="left:809.18px;top:751.60px" width="18" height="20" fill="#02898a"><rect x="0.3" y="2.7" width="3.6" height="13.4"/><rect x="0.3" y="2.7" width="9" height="3.3"/><rect x="5.3" y="7.5" width="3.9" height="8.6"/><rect x="10.8" y="2.7" width="3.8" height="13.4"/></svg><div class="a" style="left:826.74px;top:751.60px;width:8.98px;height:19.50px;background:#02898a"></div><svg style="left:826.74px;top:751.60px" width="9" height="19.5"><path d="M0 0 L7.6 9.75 L0 19.5 Z" fill="#f8f8f2"/></svg><div class="a" style="left:835.52px;top:751.60px;width:114.34px;height:19.50px;background:#02898a"></div><svg style="left:844.80px;top:756.10px" width="15" height="11" fill="#e6e6e6"><path d="M0.5 1.3 Q0.5 0.5 1.3 0.5 H5 L6.5 2 H11 Q11.8 2 11.8 2.8 V4 H3.5 L0.5 10 Z"/><path d="M3.8 4.8 H14.3 L11.5 10.3 H1 Z"/></svg><div class="a tr" style="left:861.86px;top:751.60px;color:#eaeaea;">~/<span style="color:#9fb0b0">C</span>/Bento</div><div class="a" style="left:949.66px;top:751.60px;width:167.02px;height:19.50px;background:#f1fa8c"></div><svg style="left:949.66px;top:751.60px" width="9" height="19.5"><path d="M0 0 L7.6 9.75 L0 19.5 Z" fill="#02898a"/></svg><svg style="left:967.52px;top:755.60px" width="14" height="13"><path d="M0.8 0.5 L3.6 2.5 Q6.7 1.6 9.8 2.5 L12.6 0.5 L13 4.3 Q13.8 6 13.5 8 Q12.8 12.2 6.7 12.2 Q0.6 12.2 -0.1 8 Q-0.4 6 0.4 4.3 Z" fill="#21222c"/><ellipse cx="6.7" cy="8.1" rx="5.1" ry="3.1" fill="#f1fa8c"/><ellipse cx="4.2" cy="8.1" rx="0.9" ry="1.3" fill="#21222c"/><ellipse cx="9.2" cy="8.1" rx="0.9" ry="1.3" fill="#21222c"/><path d="M2.5 11.3 Q6.7 12.6 10.9 11.3" stroke="#8a8c60" stroke-width="0.8" fill="none"/></svg><svg style="left:985.28px;top:755.10px" width="10" height="14" fill="none" stroke="#21222c" stroke-width="1.3"><path d="M1 2.6 V10 M6.6 3.7 Q6.6 7.5 1 8.2"/><circle cx="1" cy="1.4" r="1.2"/><circle cx="1" cy="11.3" r="1.2"/><circle cx="6.6" cy="2.4" r="1.2"/></svg><div class="a tr" style="left:1002.34px;top:751.60px;color:#282a36;">master !3 ?1</div><svg style="left:1116.48px;top:751.60px" width="9" height="19.5"><path d="M0 0 L7.6 9.75 L0 19.5 Z" fill="#f1fa8c"/></svg><div class="a" style="left:1134.04px;top:751.60px;width:8.98px;height:19.50px;background:#f8f8f2"></div><svg style="left:1300.86px;top:751.60px" width="9" height="19.5"><path d="M8.979999999999999 0 L2.079999999999999 9.75 L8.979999999999999 19.5 Z" fill="#21222c"/></svg><div class="a" style="left:1309.64px;top:751.60px;width:26.54px;height:19.50px;background:#21222c"></div><svg style="left:1320.62px;top:756.80px" width="10" height="10"><path d="M0.1 5.4 Q0.9 4.1 2.1 4.7 L3.6 6.2 Q5.8 2.5 8.9 0.2 Q9.8 0.4 9.3 1.3 Q6.6 4.6 4.5 8.6 Q3.6 9.8 2.6 8.8 Z" fill="#50fa7b"/></svg>
<div class="a tr" style="left:800.40px;top:361.60px;color:#e2e2de;">total 16K</div>
<div class="a tr" style="left:800.40px;top:381.10px;color:#e2e2de;">drwxr-xr-x  4 tanay tanay 4.0K Mar 10 14:57 <span class="n">.</span></div>
<div class="a tr" style="left:800.40px;top:400.60px;color:#e2e2de;">drwx------ 30 tanay tanay 4.0K Mar 10 19:01 <span class="n">..</span></div>
<div class="a tr" style="left:800.40px;top:420.10px;color:#e2e2de;">drwxr-xr-x  4 tanay tanay 4.0K Mar 10 14:57 <span class="n">Bento</span></div>
<div class="a tr" style="left:800.40px;top:439.60px;color:#e2e2de;">drwxr-xr-x  6 tanay tanay 4.0K Feb 26 06:27 <span class="n">shell-color-script</span></div>
<div class="a tr" style="left:800.40px;top:459.10px;color:#e2e2de;"><span class="n">s</span></div>
<div class="a tr" style="left:800.40px;top:537.10px;color:#e2e2de;">total 84K</div>
<div class="a tr" style="left:800.40px;top:556.60px;color:#e2e2de;">drwxr-xr-x 4 tanay tanay 4.0K Mar 10 14:57 <span class="n">.</span></div>
<div class="a tr" style="left:800.40px;top:576.10px;color:#e2e2de;">drwxr-xr-x 4 tanay tanay 4.0K Mar 10 14:57 <span class="n">..</span></div>
<div class="a tr" style="left:800.40px;top:595.60px;color:#e2e2de;">drwxr-xr-x 8 tanay tanay 4.0K Mar 10 19:01 <span class="n">.git</span></div>
<div class="a tr" style="left:800.40px;top:615.10px;color:#e2e2de;">-rw-r--r-- 1 tanay tanay  35K Mar 10 14:57 License</div>
<div class="a tr" style="left:800.40px;top:634.60px;color:#e2e2de;">-rw-r--r-- 1 tanay tanay 7.9K Mar 10 14:57 README.md</div>
<div class="a tr" style="left:800.40px;top:654.10px;color:#e2e2de;">-rw-r--r-- 1 tanay tanay 6.3K Mar 10 18:56 app.css</div>
<div class="a tr" style="left:800.40px;top:673.60px;color:#e2e2de;">drwxr-xr-x 5 tanay tanay 4.0K Mar 10 15:20 <span class="n">assets</span></div>
<div class="a tr" style="left:800.40px;top:693.10px;color:#e2e2de;">-rw-r--r-- 1 tanay tanay 5.2K Mar 10 18:58 config.js</div>
<div class="a tr" style="left:800.40px;top:712.60px;color:#e2e2de;">-rw-r--r-- 1 tanay tanay 2.2K Mar 10 18:59 index.html</div>
<div class="a tr" style="left:800.40px;top:732.10px;color:#e2e2de;">-rw-r--r-- 1 tanay tanay  187 Mar 10 18:57 package.json</div>
</body></html>
